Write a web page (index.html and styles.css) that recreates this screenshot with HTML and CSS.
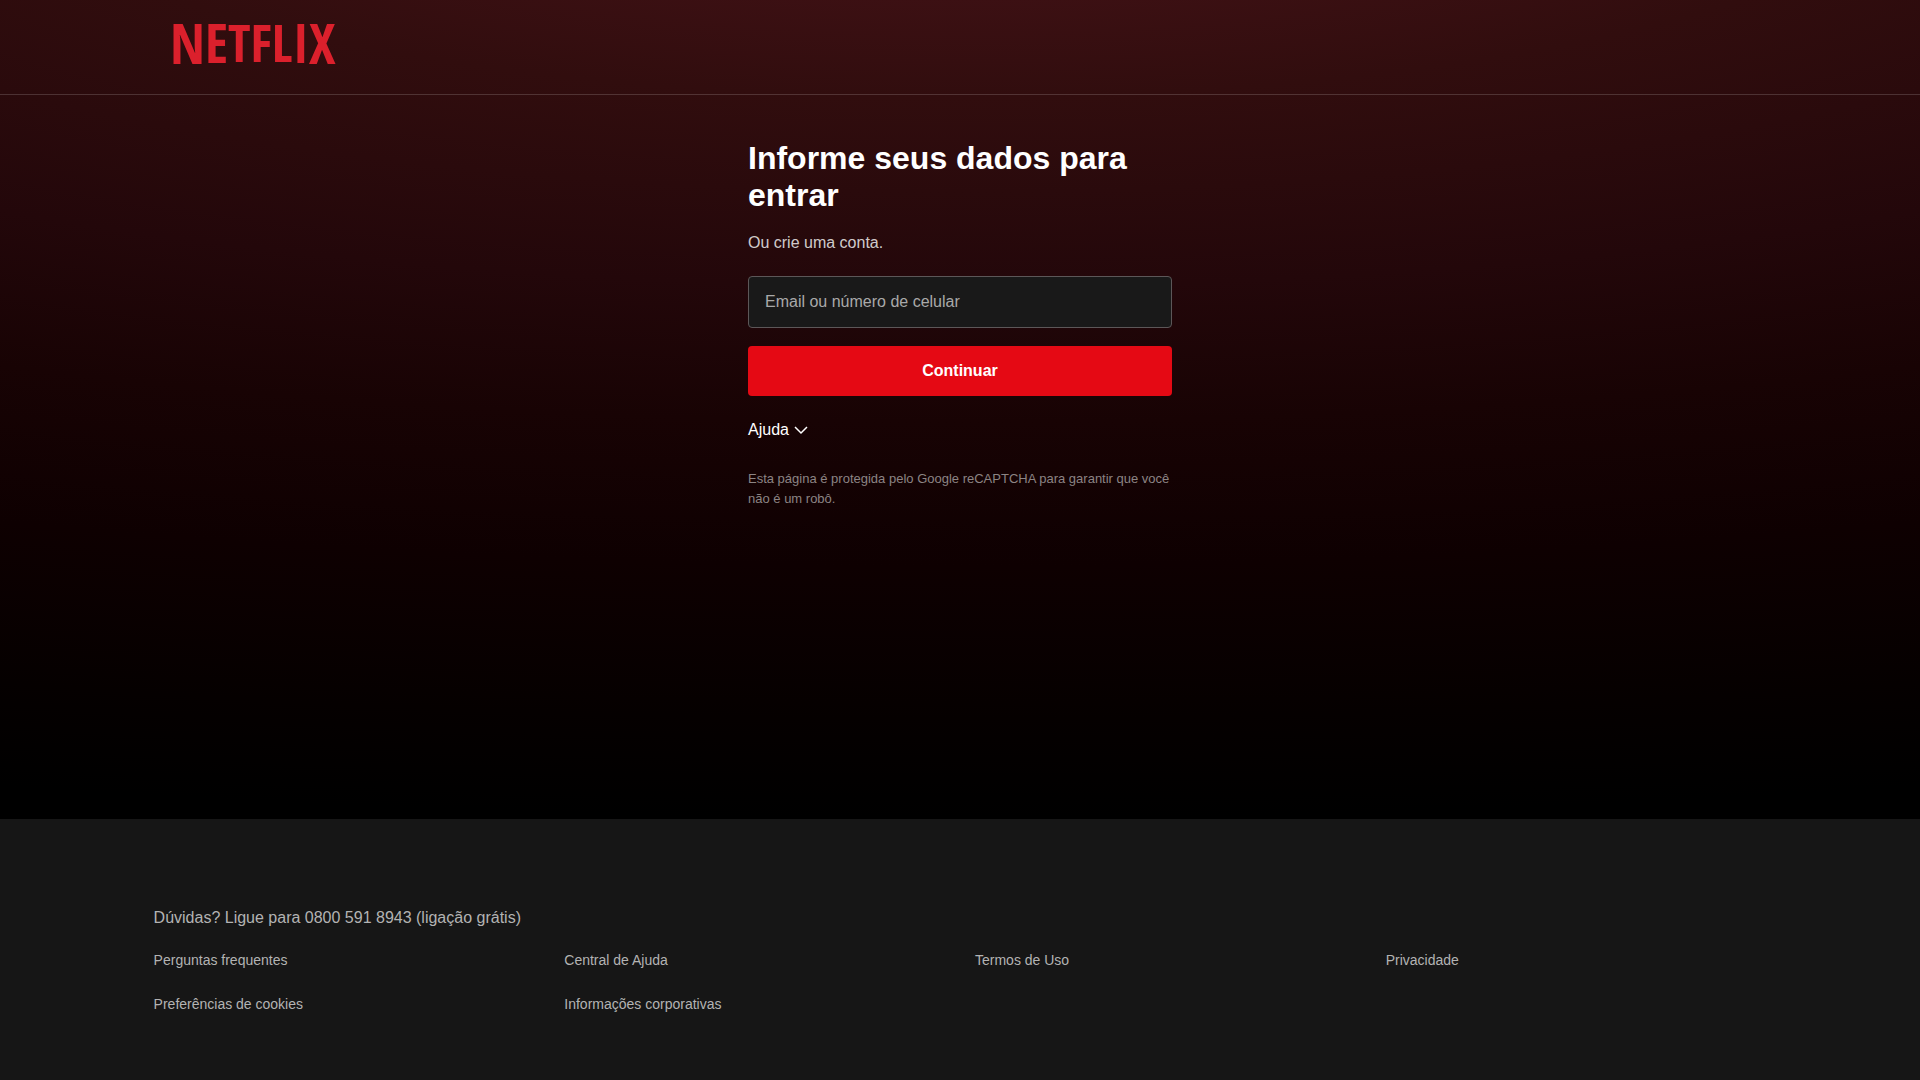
FILE: index.html
```html
<!DOCTYPE html>
<html lang="pt-BR">
<head>
  <meta charset="utf-8">
  <meta name="viewport" content="width=device-width, initial-scale=1">
  <title>Netflix</title>
  <link rel="stylesheet" href="styles.css">
</head>
<body>
  <div class="hero">
    <header class="header">
      <a class="logo" href="#" aria-label="Netflix">
        <svg class="logo-mark" width="160" height="44" viewBox="0 0 160 44" aria-hidden="true">
          <text class="logo-text" x="-4" y="41"><tspan class="size-l">N</tspan><tspan class="size-m" dy="-1">E</tspan><tspan class="size-s" dy="-1">TFL</tspan><tspan class="size-m" dy="1">I</tspan><tspan class="size-l" dy="1">X</tspan></text>
        </svg>
      </a>
    </header>

    <main class="main">
      <form class="login">
        <h1 class="title">Informe seus dados para entrar</h1>
        <p class="subtitle">Ou crie uma conta.</p>
        <input class="field" id="user" type="text" placeholder="Email ou número de celular" aria-label="Email ou número de celular">
        <button class="submit" type="submit">Continuar</button>
        <button class="help" type="button">
          Ajuda
          <svg width="16" height="16" viewBox="0 0 16 16" aria-hidden="true">
            <path d="M2 5l6 6 6-6" fill="none" stroke="currentColor" stroke-width="1.5"/>
          </svg>
        </button>
        <p class="notice">Esta página é protegida pelo Google reCAPTCHA para garantir que você não é um robô.</p>
      </form>
    </main>
  </div>

  <footer class="footer">
    <p class="phone">Dúvidas? Ligue para 0800 591 8943 (ligação grátis)</p>
    <ul class="links">
      <li><a href="#">Perguntas frequentes</a></li>
      <li><a href="#">Central de Ajuda</a></li>
      <li><a href="#">Termos de Uso</a></li>
      <li><a href="#">Privacidade</a></li>
      <li><a href="#">Preferências de cookies</a></li>
      <li><a href="#">Informações corporativas</a></li>
    </ul>
  </footer>
</body>
</html>
```
FILE: styles.css
```css
* {
  box-sizing: border-box;
  margin: 0;
  padding: 0;
}

body {
  display: flex;
  flex-direction: column;
  min-height: 100vh;
  background: #000;
  color: #fff;
  font-family: "Liberation Sans", Arial, sans-serif;
  font-size: 16px;
  line-height: 24px;
}

.hero {
  flex: 1;
  background: radial-gradient(ellipse 180% 110% at 50% -20%,
    #3c1013 18%, #310d0e 29%, #23070a 50%, #180304 65%,
    #0e0001 81%, #050000 98%, #000 109%);
}

.header {
  border-bottom: 1px solid rgba(255, 255, 255, 0.16);
  padding: 23px 8% 27px;
}

.logo {
  display: block;
  width: 160px;
  margin-left: 20px;
}

.logo-mark {
  display: block;
  overflow: visible;
}

.logo-text {
  fill: #db202c;
  font-family: "Open Sans Condensed", "Roboto Condensed", sans-serif;
  font-weight: 700;
}

.size-l { font-size: 56px; }
.size-m { font-size: 54px; }
.size-s { font-size: 52px; }

.main {
  padding: 45px 16px;
}

.login {
  display: flex;
  flex-direction: column;
  max-width: 424px;
  margin: 0 auto;
}

.title {
  font-size: 32px;
  line-height: 37px;
}

.subtitle {
  margin: 17px 0 21px;
  color: rgba(255, 255, 255, 0.8);
}

.field {
  border: 1px solid #5c5758;
  border-radius: 4px;
  padding: 13px 16px;
  background: #191919;
  color: #fff;
  font: inherit;
}

.field::placeholder {
  color: #a9a9a9;
  opacity: 1;
}

.submit {
  margin: 18px 0 22px;
  border: 0;
  border-radius: 4px;
  padding: 13px 16px;
  background: #e50914;
  color: #fff;
  font: inherit;
  font-weight: 700;
}

.help {
  display: flex;
  align-items: center;
  align-self: flex-start;
  gap: 4px;
  border: 0;
  background: none;
  color: #fff;
  font: inherit;
}

.notice {
  margin-top: 27px;
  color: #8c8484;
  font-size: 13px;
  line-height: 20px;
}

.footer {
  padding: 87px 8% 66px;
  background: #161616;
  color: #b3b3b3;
}

.links {
  display: grid;
  grid-template-columns: repeat(4, 1fr);
  gap: 24px 30px;
  margin-top: 20px;
  font-size: 14px;
  line-height: 20px;
  list-style: none;
}

.links a {
  display: block;
  color: inherit;
  text-decoration: none;
}
```
